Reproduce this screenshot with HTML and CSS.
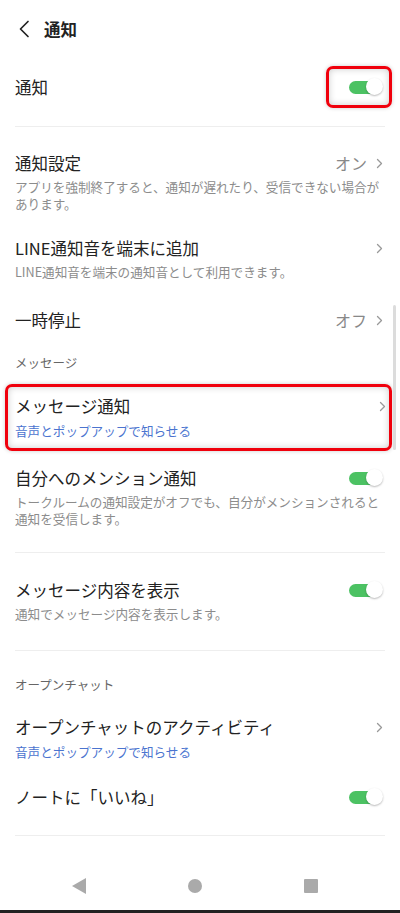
FILE: index.html
```html
<!DOCTYPE html>
<html lang="ja">
<head>
  <meta charset="UTF-8">
  <meta name="viewport" content="width=device-width, initial-scale=1.0">
  <title>通知</title>
  <link rel="stylesheet" href="styles.css">
</head>
<body>
  <div class="screen">
    <header class="topbar">
      <svg class="back" width="12" height="18" viewBox="0 0 12 18">
        <path d="M10 1.5 L2.5 9 L10 16.5" fill="none" stroke="#222" stroke-width="1.7" stroke-linecap="round" stroke-linejoin="round"/>
      </svg>
      <h1>通知</h1>
    </header>

    <div class="master">
      <span class="title">通知</span>
      <span class="mark mark-toggle"><span class="switch"></span></span>
    </div>
    <div class="divider"></div>

    <div class="item first">
      <div class="head">
        <span class="title">通知設定</span>
        <span class="value">オン <svg class="chev" width="7" height="11" viewBox="0 0 7 11"><path d="M1.5 1.5 L5.5 5.5 L1.5 9.5" fill="none" stroke="#999" stroke-width="1.3" stroke-linecap="round" stroke-linejoin="round"/></svg></span>
      </div>
      <p class="desc">アプリを強制終了すると、通知が遅れたり、受信できない場合があります。</p>
    </div>

    <div class="item">
      <div class="head">
        <span class="title">LINE通知音を端末に追加</span>
        <svg class="chev" width="7" height="11" viewBox="0 0 7 11"><path d="M1.5 1.5 L5.5 5.5 L1.5 9.5" fill="none" stroke="#999" stroke-width="1.3" stroke-linecap="round" stroke-linejoin="round"/></svg>
      </div>
      <p class="desc">LINE通知音を端末の通知音として利用できます。</p>
    </div>

    <div class="item pause">
      <div class="head">
        <span class="title">一時停止</span>
        <span class="value">オフ <svg class="chev" width="7" height="11" viewBox="0 0 7 11"><path d="M1.5 1.5 L5.5 5.5 L1.5 9.5" fill="none" stroke="#999" stroke-width="1.3" stroke-linecap="round" stroke-linejoin="round"/></svg></span>
      </div>
    </div>

    <div class="section">メッセージ</div>

    <div class="item mark mark-row">
      <div class="head">
        <span class="title">メッセージ通知</span>
        <svg class="chev" width="7" height="11" viewBox="0 0 7 11"><path d="M1.5 1.5 L5.5 5.5 L1.5 9.5" fill="none" stroke="#999" stroke-width="1.3" stroke-linecap="round" stroke-linejoin="round"/></svg>
      </div>
      <p class="sub">音声とポップアップで知らせる</p>
    </div>

    <div class="item mention">
      <div class="head">
        <span class="title">自分へのメンション通知</span>
        <span class="switch"></span>
      </div>
      <p class="desc">トークルームの通知設定がオフでも、自分がメンションされると通知を受信します。</p>
    </div>
    <div class="divider"></div>

    <div class="item preview">
      <div class="head">
        <span class="title">メッセージ内容を表示</span>
        <span class="switch"></span>
      </div>
      <p class="desc">通知でメッセージ内容を表示します。</p>
    </div>
    <div class="divider"></div>

    <div class="section openchat">オープンチャット</div>

    <div class="item activity">
      <div class="head">
        <span class="title">オープンチャットのアクティビティ</span>
        <svg class="chev" width="7" height="11" viewBox="0 0 7 11"><path d="M1.5 1.5 L5.5 5.5 L1.5 9.5" fill="none" stroke="#999" stroke-width="1.3" stroke-linecap="round" stroke-linejoin="round"/></svg>
      </div>
      <p class="sub">音声とポップアップで知らせる</p>
    </div>

    <div class="item note">
      <div class="head">
        <span class="title">ノートに「いいね」</span>
        <span class="switch"></span>
      </div>
    </div>
    <div class="divider"></div>

    <div class="scrollbar"></div>

    <nav class="navbar">
      <svg width="16" height="18" viewBox="0 0 16 18"><path d="M15 1 L15 17 L1 9 Z" fill="#aaa"/></svg>
      <svg width="16" height="16" viewBox="0 0 16 16"><circle cx="8" cy="8" r="7" fill="#aaa"/></svg>
      <svg width="16" height="16" viewBox="0 0 16 16"><rect x="1" y="1" width="14" height="14" rx="1" fill="#aaa"/></svg>
    </nav>
    <div class="bottom-edge"></div>
  </div>
</body>
</html>
```

FILE: styles.css
```css
body {
  margin: 0;
  background: #fff;
  font-family: "Noto Sans CJK JP", "Noto Sans", sans-serif;
  color: #222;
}
.screen {
  position: relative;
  width: 400px;
  height: 913px;
  display: flex;
  flex-direction: column;
  overflow: hidden;
}
p {
  margin: 0;
}

/* top bar */
.topbar {
  height: 58px;
  display: flex;
  align-items: center;
  padding-left: 18px;
  gap: 14px;
}
.topbar h1 {
  margin: 0;
  font-size: 16.5px;
  font-weight: 700;
  line-height: 22px;
}

/* master switch row */
.master {
  display: flex;
  align-items: center;
  justify-content: space-between;
  padding: 8px 17px 18px 15px;
}
.title {
  font-size: 16.5px;
  line-height: 22px;
}
.divider {
  height: 1px;
  background: #eeeeee;
  margin: 0 15px;
}

/* list items */
.item {
  padding: 12px 17px 13px 15px;
}
.item.first {
  padding-top: 25px;
}
.item.pause {
  padding-top: 16px;
  padding-bottom: 23px;
}
.head {
  display: flex;
  align-items: center;
  justify-content: space-between;
  height: 22px;
}
.value {
  display: flex;
  align-items: center;
  gap: 9px;
  font-size: 16px;
  color: #888;
}
.chev {
  display: block;
}
.desc {
  margin-top: 4px;
  font-size: 12.6px;
  line-height: 17px;
  color: #8c8c8c;
}
.sub {
  margin-top: 5px;
  font-size: 12.6px;
  line-height: 17px;
  color: #4b74cf;
}
.section {
  padding: 0 15px;
  font-size: 12.5px;
  line-height: 18px;
  color: #666;
}

/* toggle */
.switch {
  position: relative;
  display: block;
  width: 34px;
  height: 18px;
}
.switch::before {
  content: "";
  position: absolute;
  left: 0;
  top: 3px;
  width: 27px;
  height: 13px;
  border-radius: 7px;
  background: #4cc263;
}
.switch::after {
  content: "";
  position: absolute;
  right: 0;
  top: 0;
  width: 17px;
  height: 17px;
  border-radius: 50%;
  background: #fff;
  box-shadow: 0 1px 2px rgba(0, 0, 0, 0.28);
}

/* red highlight frames */
.mark {
  border: 3px solid #f0000c;
  border-radius: 7px;
  box-shadow: inset 0 0 7px rgba(0, 0, 0, 0.2), 0 0 4px rgba(0, 0, 0, 0.2);
}
.mark-toggle {
  display: flex;
  align-items: center;
  justify-content: flex-end;
  box-sizing: border-box;
  width: 66px;
  height: 42px;
  padding-right: 6px;
  margin-right: -9px;
}
.item.mark-row {
  margin: 12px 8px 0 5px;
  padding: 8px 3px 9px 7px;
}

.item.mention {
  padding-top: 16px;
  padding-bottom: 25px;
}
.item.preview {
  padding-top: 26px;
  padding-bottom: 28px;
}
.section.openchat {
  padding-top: 25px;
}
.item.activity {
  padding-top: 22px;
  padding-bottom: 0;
}
.item.note {
  padding-top: 26px;
  padding-bottom: 27px;
}

.scrollbar {
  position: absolute;
  left: 393px;
  top: 305px;
  width: 3px;
  height: 145px;
  border-radius: 2px;
  background: #dcdcdc;
}

/* system nav */
.navbar {
  flex: 1;
  display: flex;
  align-items: center;
  justify-content: space-between;
  padding: 26px 81px 0 71px;
}
.bottom-edge {
  height: 3px;
  background: #222;
}
```
